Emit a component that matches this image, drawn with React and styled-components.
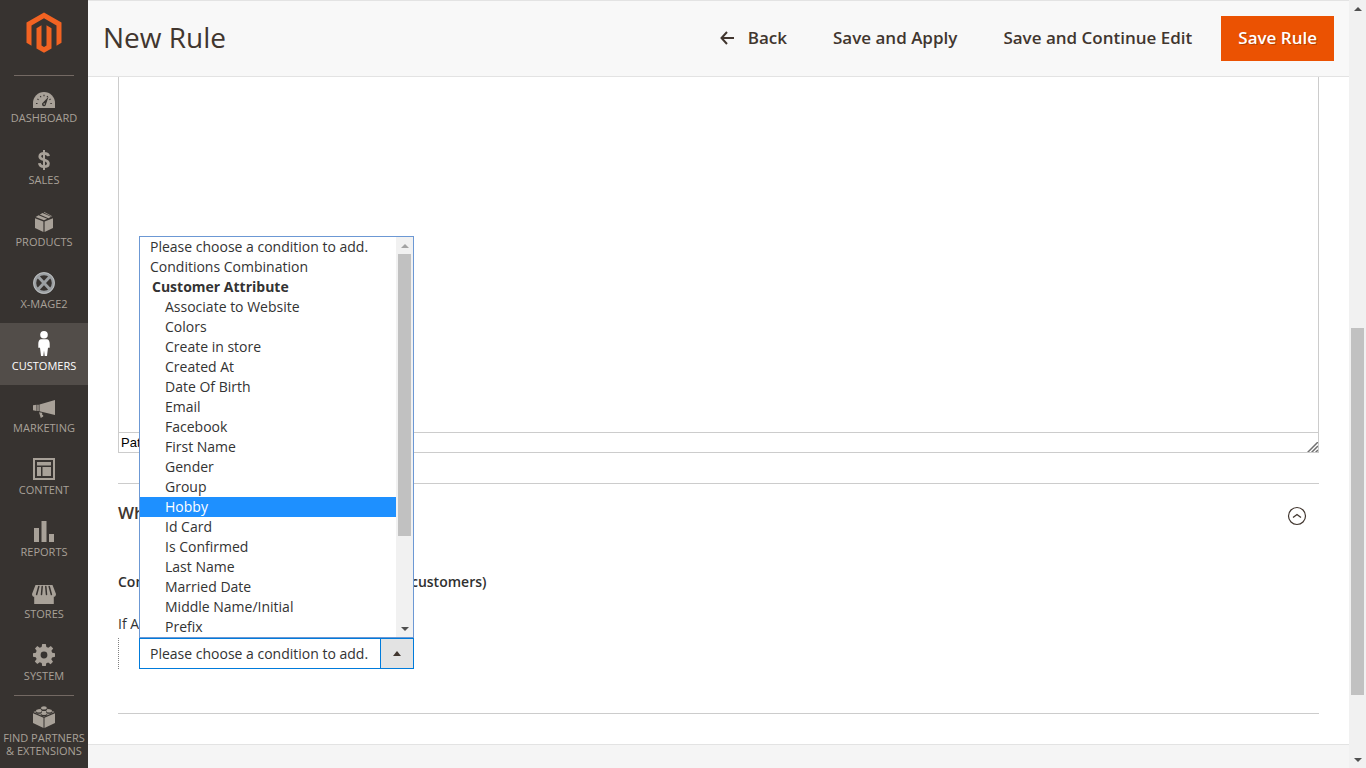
import React from 'react'
import styled, { createGlobalStyle } from 'styled-components'

const GlobalStyle = createGlobalStyle`
  * {
    box-sizing: border-box;
  }
  body {
    margin: 0;
    background: #fff;
    color: #333;
    font-family: 'Open Sans', sans-serif;
    font-size: 14px;
    line-height: 20px;
  }
`

const Page = styled.div`
  display: grid;
  grid-template-columns: 88px 1fr 17px;
  height: 100vh;
  overflow: hidden;
`

/* Sidebar */

const Sidebar = styled.nav`
  background: #373330;
  overflow: hidden;
`

const LogoLink = styled.a`
  display: flex;
  justify-content: center;
  height: 75px;
  padding-top: 12px;
`

const Menu = styled.ul`
  list-style: none;
  margin: 0;
  padding: 0;
`

const MenuItem = styled.li`
  background: ${p => (p.$active ? '#524d49' : 'transparent')};
  &:first-child::before,
  &:last-child::before {
    content: '';
    display: block;
    height: 1px;
    margin: 0 14px -1px;
    background: #736963;
  }
`

const MenuLink = styled.a`
  display: flex;
  flex-direction: column;
  align-items: center;
  min-height: 62px;
  padding-top: 8px;
  color: ${p => (p.$active ? '#fff' : '#a8a198')};
  font-size: 11px;
  line-height: 13px;
  text-align: center;
  text-decoration: none;
  text-transform: uppercase;
  white-space: nowrap;
`

const IconBox = styled.span`
  display: flex;
  align-items: flex-end;
  justify-content: center;
  height: 25px;
  margin-bottom: 3px;
`

/* Header */

const Main = styled.main`
  display: flex;
  flex-direction: column;
  min-width: 0;
`

const Header = styled.header`
  display: flex;
  align-items: flex-start;
  justify-content: space-between;
  padding: 15px;
  background: #f8f8f8;
  border-top: 1px solid #e3e3e3;
  border-bottom: 1px solid #e3e3e3;
`

const Title = styled.h1`
  margin: 0;
  color: #41362f;
  font-size: 28px;
  font-weight: 400;
  line-height: 42px;
`

const Actions = styled.div`
  display: flex;
  align-items: center;
  gap: 12px;
`

const ActionButton = styled.button`
  display: flex;
  align-items: center;
  gap: 14px;
  height: 45px;
  padding: 0 17px 1px;
  border: 0;
  background: ${p => (p.$primary ? '#eb5202' : 'transparent')};
  color: ${p => (p.$primary ? '#fff' : '#41362f')};
  font-family: inherit;
  font-size: 17px;
  font-weight: 600;
  line-height: 20px;
  text-shadow: ${p => (p.$primary ? '1px 1px 0 rgba(0, 0, 0, 0.25)' : 'none')};
`

/* Content */

const Content = styled.div`
  padding: 0 30px 30px;
`

const Editor = styled.div`
  border: 1px solid #ccc;
  border-top: 0;
`

const EditorArea = styled.div`
  height: 355px;
`

const StatusBar = styled.div`
  display: flex;
  justify-content: space-between;
  align-items: flex-end;
  height: 20px;
  padding-left: 2px;
  border-top: 1px solid #ccc;
  color: #000;
  font-family: 'Liberation Sans', sans-serif;
  font-size: 13px;
  line-height: 19px;
`

const Section = styled.section`
  margin-top: 30px;
  padding-bottom: 44px;
  border-top: 1px solid #ccc;
  border-bottom: 1px solid #ccc;
`

const SectionHead = styled.div`
  display: flex;
  align-items: flex-start;
  justify-content: space-between;
  height: 42px;
  padding: 17px 12px 0 0;
`

const SectionTitle = styled.h2`
  margin: 0;
  color: #41362f;
  font-size: 17px;
  font-weight: 600;
  line-height: 24px;
`

const Toggle = styled.button`
  display: flex;
  padding: 5px 0 0;
  border: 0;
  background: none;
  color: #41362f;
`

const Legend = styled.h3`
  margin: 46px 0 0;
  color: #303030;
  font-size: 14px;
  font-weight: 600;
  line-height: 20px;
`

const RuleText = styled.p`
  margin: 22px 0 4px;
`

const RuleBranch = styled.div`
  padding-left: 20px;
  border-left: 1px dotted #808080;
`

/* Condition select */

const SelectWrap = styled.div`
  position: relative;
  width: 275px;
`

const Select = styled.select`
  display: block;
  appearance: none;
  width: 100%;
  height: 31px;
  padding: 0 34px 0 10px;
  border: 1px solid #007bdb;
  border-radius: 0;
  background: #fff;
  color: #333;
  font-family: inherit;
  font-size: 14px;
  outline: 0;
`

const SelectArrow = styled.span`
  position: absolute;
  top: 1px;
  right: 1px;
  bottom: 1px;
  display: flex;
  align-items: center;
  justify-content: center;
  width: 33px;
  border-left: 1px solid #007bdb;
  background: #e3e3e3;
  pointer-events: none;
`

const Popup = styled.div`
  position: absolute;
  left: 0;
  right: 0;
  bottom: 100%;
  display: grid;
  grid-template-columns: 1fr 17px;
  border: 1px solid #6c98d4;
  background: #fff;
`

const Options = styled.ul`
  list-style: none;
  margin: 0;
  padding: 0;
`

const Option = styled.li`
  padding-left: ${p => (p.$nested ? '25px' : '10px')};
  background: ${p => (p.$active ? '#1e90ff' : 'transparent')};
  color: ${p => (p.$active ? '#fff' : '#333')};
  line-height: 20px;
`

const GroupLabel = styled.li`
  padding-left: 12px;
  font-weight: 700;
  line-height: 20px;
`

/* Scroll bars */

const Track = styled.div`
  display: grid;
  grid-template-rows: 17px ${p => p.$before}fr ${p => p.$thumb}fr ${p => p.$after}fr 17px;
  justify-items: center;
  align-items: center;
  background: #f1f1f1;
`

const Thumb = styled.div`
  grid-row: 3;
  width: 13px;
  height: 100%;
  background: #c1c1c1;
`

const TrackArrow = styled.svg`
  grid-row: ${p => (p.$down ? 5 : 1)};
`

const Footer = styled.footer`
  flex: 1;
  background: #f5f5f5;
  border-top: 1px solid #e3e3e3;
`

const Arrow = ({ down, color = '#505050' }) => (
  <TrackArrow $down={down} width="8" height="4" viewBox="0 0 8 4">
    <path d={down ? 'M0 0h8L4 4z' : 'M0 4h8L4 0z'} fill={color} />
  </TrackArrow>
)

const ScrollBar = ({ before, thumb, after, upColor }) => (
  <Track $before={before} $thumb={thumb} $after={after} aria-hidden="true">
    <Arrow color={upColor} />
    <Thumb />
    <Arrow down />
  </Track>
)

const Icon = ({ w = 22, h = 22, children }) => (
  <svg width={w} height={h} viewBox={`0 0 ${w} ${h}`} fill="currentColor" aria-hidden="true">
    {children}
  </svg>
)

const Bg = '#373330'

const icons = {
  dashboard: (
    <Icon h={16}>
      <path d="M0 16v-5a11 11 0 0 1 22 0v5z" />
      <path
        d="M3 11.500h1.500M4.400 7l1.200.7M7.300 4l.7 1.200M11 2.800v1.400M14.700 4L14 5.200M18.800 11.500h-1.400M17.600 7l-1.200.7"
        stroke={Bg}
        strokeWidth="1.100"
      />
      <path d="M15.500 4.800L13 12.200a2 2 0 1 1-3-1.700z" fill={Bg} />
      <circle cx="11.200" cy="12" r=".8" />
    </Icon>
  ),
  sales: (
    <Icon w={12} h={20}>
      <path
        d="M10.500 6.200C10.300 4.300 8.600 3.400 6 3.400S1.800 4.500 1.800 6.400c0 4.200 8.600 2.500 8.600 7 0 2.100-1.900 3.200-4.400 3.200-2.800 0-4.400-1.200-4.600-3.400"
        fill="none"
        stroke="currentColor"
        strokeWidth="2.800"
      />
      <path d="M5 0h2v20H5z" />
    </Icon>
  ),
  products: (
    <Icon w={18} h={20}>
      <path d="M0 6.200l8.400 3.300V20L0 16zM18 6.200L9.600 9.500V20l8.400-4z" />
      <path d="M.6 5l3-1.800 8.600 3.600L9 8.300zM4.800 2.500L7.500 1l8.700 3.800-2.800 1.500zM8.700.5L9.300 0l8 4.300-.6.300z" />
    </Icon>
  ),
  xmage: (
    <Icon>
      <circle cx="11" cy="11" r="9.300" fill="none" stroke="#9b9fa2" strokeWidth="3" />
      <path d="M5 4.500l12 13M17 4.500l-12 13" stroke="#9b9fa2" strokeWidth="3" />
      <circle cx="11" cy="11" r="10.400" fill="none" stroke="#c4c6c7" strokeWidth=".8" />
    </Icon>
  ),
  customers: (
    <Icon w={12} h={25}>
      <circle cx="6" cy="3.800" r="3.800" />
      <path d="M2.800 8.200h6.400c1.600.2 2.500 2.300 2.500 4.600v4H10L9 25H6.700L6 19.500 5.300 25H3L2 16.800H.3v-4c0-2.300.9-4.400 2.500-4.600z" />
    </Icon>
  ),
  marketing: (
    <Icon h={18}>
      <path d="M22 0v15L6.500 11.200V4.500zM0 5.200l3.500-.5v6.200L0 10.300zM4.300 4.700h1.400v6.400H4.300zM6 12.200l3.200.6v2l1 .4v1.300L7.800 18z" />
    </Icon>
  ),
  content: (
    <Icon>
      <path d="M0 0h22v22H0zM2 2v18h18V2z" fillRule="evenodd" />
      <path d="M4 4h14v3.500H4zM4 9h4v9H4zM9.500 9H18v9H9.500z" />
    </Icon>
  ),
  reports: (
    <Icon w={20} h={21}>
      <path d="M0 7h5v14H0zM7.500 0h5v21h-5zM15 13h5v8h-5z" />
    </Icon>
  ),
  stores: (
    <Icon w={24} h={19}>
      <path d="M3.500 0h17L24 9c0 2-1.300 2.800-2.200 2.800V19H2.200v-7.200C1.300 11.800 0 11 0 9z" />
      <path
        d="M6.800 1.500L4.600 9.500M10.200 1.500L9.500 9.500M13.800 1.500l.7 8M17.200 1.500l2.200 8"
        stroke={Bg}
        strokeWidth="1.500"
        strokeLinecap="round"
      />
    </Icon>
  ),
  system: (
    <Icon>
      <path
        fillRule="evenodd"
        d="M9.200 0h3.600l.6 3 1.900.8L17.800 2l2.400 2.400-1.800 2.400.8 2 2.800.5v3.500l-2.900.6-.8 1.900 1.700 2.500-2.400 2.400-2.400-1.800-1.900.8-.5 2.800H9.200l-.5-2.900-2-.8-2.400 1.700-2.500-2.500 1.800-2.400-.8-1.900L0 12.700V9.200l2.900-.5.7-1.900L2 4.400 4.300 2l2.400 1.700 1.900-.8zM11 7.600a3.400 3.400 0 1 0 0 6.800 3.400 3.400 0 0 0 0-6.800z"
      />
    </Icon>
  ),
  partners: (
    <Icon>
      <path d="M0 7.200l10.500 4.500V22L0 17zM22 7.200l-10.500 4.500V22L22 17zM11 1.200L21.500 6 11 10.700.5 6z" />
      <g fill={Bg}>
        <ellipse cx="11" cy="3.200" rx="3.300" ry="1.900" />
        <ellipse cx="5.800" cy="6" rx="3.300" ry="1.800" />
        <ellipse cx="16.200" cy="6" rx="3.300" ry="1.800" />
        <ellipse cx="11" cy="8.600" rx="3.300" ry="1.800" />
      </g>
      <ellipse cx="11" cy="1.900" rx="2.900" ry="1.700" />
      <ellipse cx="5.800" cy="4.900" rx="2.900" ry="1.600" />
      <ellipse cx="16.200" cy="4.900" rx="2.900" ry="1.600" />
      <ellipse cx="11" cy="7.500" rx="2.900" ry="1.600" />
    </Icon>
  )
}

const menu = [
  { id: 'dashboard', label: 'Dashboard' },
  { id: 'sales', label: 'Sales' },
  { id: 'products', label: 'Products' },
  { id: 'xmage', label: 'X-Mage2' },
  { id: 'customers', label: 'Customers', active: true },
  { id: 'marketing', label: 'Marketing' },
  { id: 'content', label: 'Content' },
  { id: 'reports', label: 'Reports' },
  { id: 'stores', label: 'Stores' },
  { id: 'system', label: 'System' },
  { id: 'partners', label: <>Find Partners<br />&amp; Extensions</> }
]

const attributes = [
  'Associate to Website',
  'Colors',
  'Create in store',
  'Created At',
  'Date Of Birth',
  'Email',
  'Facebook',
  'First Name',
  'Gender',
  'Group',
  'Hobby',
  'Id Card',
  'Is Confirmed',
  'Last Name',
  'Married Date',
  'Middle Name/Initial',
  'Prefix'
]

const Logo = () => (
  <svg width="36" height="41" viewBox="0 0 36 41" fill="#f26322" aria-hidden="true">
    <path d="M18 .5l17.500 10v20.300l-5 2.900V13.400L18 6.200 5.500 13.400v20.300l-5-2.900V10.500z" />
    <path d="M10.500 16.200l5-2.900v20.300l2.500 1.500 2.500-1.500V13.300l5 2.900v20.200L18 40.700l-7.500-4.300z" />
  </svg>
)

const ConditionSelect = () => (
  <SelectWrap>
    <Select aria-label="Condition" defaultValue="">
      <option value="">Please choose a condition to add.</option>
    </Select>
    <SelectArrow>
      <svg width="8" height="5" viewBox="0 0 8 5">
        <path d="M0 5h8L4 0z" fill="#41362f" />
      </svg>
    </SelectArrow>
    <Popup>
      <Options role="listbox" aria-label="Conditions">
        <Option role="option">Please choose a condition to add.</Option>
        <Option role="option">Conditions Combination</Option>
        <GroupLabel role="presentation">Customer Attribute</GroupLabel>
        {attributes.map(name => (
          <Option role="option" key={name} $nested $active={name === 'Hobby'} aria-selected={name === 'Hobby'}>
            {name}
          </Option>
        ))}
      </Options>
      <ScrollBar before={0} thumb={282} after={84} upColor="#a3a3a3" />
    </Popup>
  </SelectWrap>
)

const App = () => (
  <Page>
    <GlobalStyle />
    <Sidebar>
      <LogoLink href="#" aria-label="Home">
        <Logo />
      </LogoLink>
      <Menu>
        {menu.map(item => (
          <MenuItem key={item.id} $active={item.active}>
            <MenuLink href="#" $active={item.active}>
              <IconBox>{icons[item.id]}</IconBox>
              <span>{item.label}</span>
            </MenuLink>
          </MenuItem>
        ))}
      </Menu>
    </Sidebar>

    <Main>
      <Header>
        <Title>New Rule</Title>
        <Actions>
          <ActionButton>
            <svg width="14" height="14" viewBox="0 0 14 14" fill="none" stroke="currentColor" strokeWidth="2">
              <path d="M7 1L1.500 7 7 13M1.500 7H14" />
            </svg>
            Back
          </ActionButton>
          <ActionButton>Save and Apply</ActionButton>
          <ActionButton>Save and Continue Edit</ActionButton>
          <ActionButton $primary>Save Rule</ActionButton>
        </Actions>
      </Header>

      <Content>
        <Editor>
          <EditorArea />
          <StatusBar>
            <span>Path:</span>
            <svg width="11" height="10" viewBox="0 0 11 10" stroke="#707070" strokeWidth="1.500">
              <path d="M0 11L11 0M4 11l7-7M8 11l3-3" />
            </svg>
          </StatusBar>
        </Editor>

        <Section>
          <SectionHead>
            <SectionTitle>What</SectionTitle>
            <Toggle aria-label="Collapse section">
              <svg width="20" height="20" viewBox="0 0 20 20" fill="none" stroke="currentColor">
                <circle cx="10" cy="10" r="8.500" strokeWidth="1.200" />
                <path d="M6 11.500l4-3 4 3" strokeWidth="1.300" />
              </svg>
            </Toggle>
          </SectionHead>
          <Legend>Conditions (leave blank to apply rule for all customers)</Legend>
          <RuleText>If ALL</RuleText>
          <RuleBranch>
            <ConditionSelect />
          </RuleBranch>
        </Section>
      </Content>
      <Footer />
    </Main>

    <ScrollBar before={311} thumb={367} after={56} />
  </Page>
)

export default App
